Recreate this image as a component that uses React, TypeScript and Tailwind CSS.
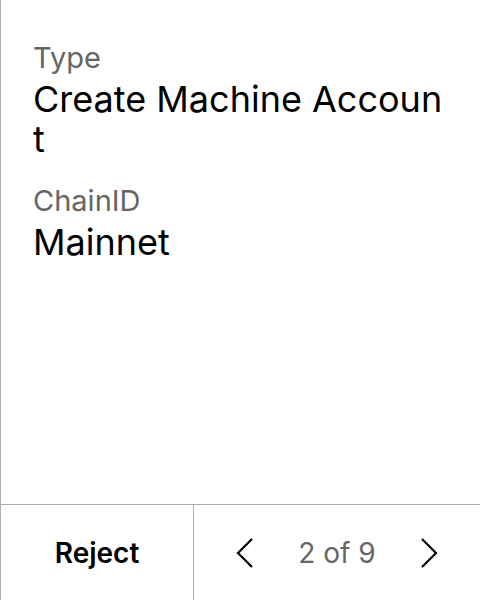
export default function App() {
  return (
    <div className="flex h-[600px] w-[480px] flex-col border-l border-[#acacac] bg-white font-['Inter',sans-serif] text-black">
      <div className="flex flex-1 flex-col gap-6 px-8 pt-10">
        <Field label="Type" value="Create Machine Account" />
        <Field label="ChainID" value="Mainnet" />
      </div>
      <div className="flex h-24 border-t border-[#acacac]">
        <button className="flex w-[192px] items-center justify-center text-[28px] font-semibold">Reject</button>
        <div className="flex flex-1 items-center justify-between border-l border-[#acacac] px-[42px]">
          <Chevron dir="left" />
          <span className="text-[28px] text-[#666]">2 of 9</span>
          <Chevron dir="right" />
        </div>
      </div>
    </div>
  );
}

function Field({ label, value }: { label: string; value: string }) {
  return (
    <div className="flex flex-col gap-1">
      <div className="text-[29px] leading-[35px] text-[#666]">{label}</div>
      <div className="break-all text-[36px] leading-[40px]">{value}</div>
    </div>
  );
}

function Chevron({ dir }: { dir: "left" | "right" }) {
  return (
    <svg width="18" height="32" viewBox="0 0 18 32" fill="none" stroke="black" strokeWidth="2.2">
      {dir === "left" ? <polyline points="16,2 2,16 16,30" /> : <polyline points="2,2 16,16 2,30" />}
    </svg>
  );
}
